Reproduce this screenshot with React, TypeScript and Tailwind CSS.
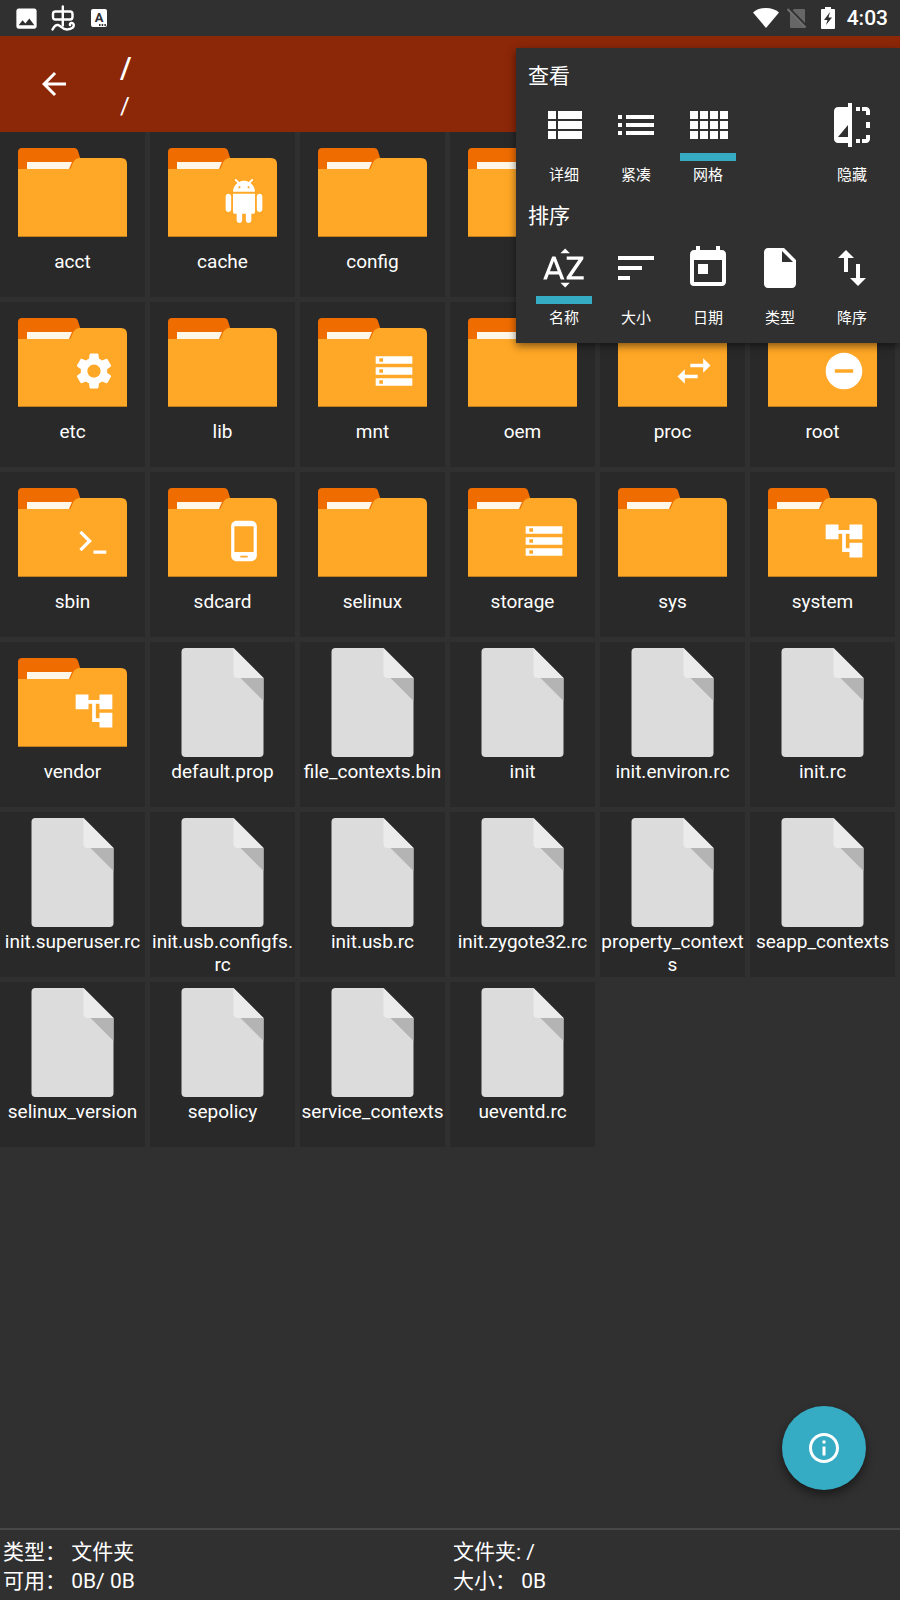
import React from 'react';
import {
  MdAccountTree,
  MdArrowBack,
  MdImage,
  MdInfoOutline,
  MdInsertDriveFile,
  MdList,
  MdPhoneAndroid,
  MdRemoveCircle,
  MdSettings,
  MdSort,
  MdSortByAlpha,
  MdStorage,
  MdSwapHoriz,
  MdSwapVert,
  MdToday,
} from 'react-icons/md';

type IconProps = { size?: number; x?: number; y?: number; className?: string };
type Icon = React.ComponentType<IconProps>;

const AndroidIcon = ({ size = 24, ...rest }: IconProps) => (
  <svg viewBox="0 0 24 24" width={size} height={size} fill="currentColor" {...rest}>
    <path d="M6 18c0 .55.45 1 1 1h1v3.5c0 .83.67 1.5 1.5 1.5s1.5-.67 1.5-1.5V19h2v3.5c0 .83.67 1.5 1.5 1.5s1.5-.67 1.5-1.5V19h1c.55 0 1-.45 1-1V8H6v10zM3.5 8C2.67 8 2 8.67 2 9.5v7c0 .83.67 1.5 1.5 1.5S5 17.33 5 16.5v-7C5 8.67 4.33 8 3.5 8zm17 0c-.83 0-1.5.67-1.5 1.5v7c0 .83.67 1.5 1.5 1.5s1.5-.67 1.5-1.5v-7c0-.83-.67-1.5-1.5-1.5zm-4.97-5.84l1.3-1.3c.2-.2.2-.51 0-.71-.2-.2-.51-.2-.71 0l-1.48 1.48C13.85 1.23 12.95 1 12 1c-.96 0-1.86.23-2.66.63L7.85.15c-.2-.2-.51-.2-.71 0-.2.2-.2.51 0 .71l1.31 1.31C6.97 3.26 6 5.01 6 7h12c0-1.99-.97-3.75-2.47-4.84zM10 5H9V4h1v1zm5 0h-1V4h1v1z" />
  </svg>
);

const PromptIcon = ({ size = 24, ...rest }: IconProps) => (
  <svg viewBox="0 0 24 24" width={size} height={size} fill="none" stroke="currentColor" strokeWidth="1.8" {...rest}>
    <path d="M4.6 7l5 5-5 5M11.7 18.100h7" />
  </svg>
);

const DetailsIcon = ({ size = 24, ...rest }: IconProps) => (
  <svg viewBox="0 0 24 24" width={size} height={size} fill="currentColor" {...rest}>
    <path d="M4 14h4v-4H4v4zm0 5h4v-4H4v4zM4 9h4V5H4v4zm5 5h12v-4H9v4zm0 5h12v-4H9v4zM9 5v4h12V5H9z" />
  </svg>
);

const GridIcon = ({ size = 24, ...rest }: IconProps) => (
  <svg viewBox="0 0 24 24" width={size} height={size} fill="currentColor" {...rest}>
    <path d="M3 9h4V5H3v4zm0 5h4v-4H3v4zm5 0h4v-4H8v4zm5 0h4v-4h-4v4zM8 9h4V5H8v4zm5-4v4h4V5h-4zm5 9h4v-4h-4v4zM3 19h4v-4H3v4zm5 0h4v-4H8v4zm5 0h4v-4h-4v4zm5 0h4v-4h-4v4zm0-14v4h4V5h-4z" />
  </svg>
);

const HideIcon = ({ size = 24, ...rest }: IconProps) => (
  <svg viewBox="0 0 24 24" width={size} height={size} fill="currentColor" {...rest}>
    <path d="M10 3H5c-1.1 0-2 .9-2 2v14c0 1.1.9 2 2 2h5v2h2V1h-2v2zm0 15H5l5-6v6z" />
    <path d="M14 3h2v2h-2zM17 3h2c1.1 0 2 .9 2 2v2h-2V5h-2zM19 10.5h2v3h-2zM14 19h2v2h-2zM19 17h2v2c0 1.1-.9 2-2 2h-2v-2h2z" />
  </svg>
);

type Entry = { name: string; folder?: boolean; badge?: Icon };

const entries: Entry[] = [
  { name: 'acct', folder: true },
  { name: 'cache', folder: true, badge: AndroidIcon },
  { name: 'config', folder: true },
  { name: 'd', folder: true },
  { name: 'data', folder: true },
  { name: 'dev', folder: true },
  { name: 'etc', folder: true, badge: MdSettings },
  { name: 'lib', folder: true },
  { name: 'mnt', folder: true, badge: MdStorage },
  { name: 'oem', folder: true },
  { name: 'proc', folder: true, badge: MdSwapHoriz },
  { name: 'root', folder: true, badge: MdRemoveCircle },
  { name: 'sbin', folder: true, badge: PromptIcon },
  { name: 'sdcard', folder: true, badge: MdPhoneAndroid },
  { name: 'selinux', folder: true },
  { name: 'storage', folder: true, badge: MdStorage },
  { name: 'sys', folder: true },
  { name: 'system', folder: true, badge: MdAccountTree },
  { name: 'vendor', folder: true, badge: MdAccountTree },
  { name: 'default.prop' },
  { name: 'file_contexts.bin' },
  { name: 'init' },
  { name: 'init.environ.rc' },
  { name: 'init.rc' },
  { name: 'init.superuser.rc' },
  { name: 'init.usb.configfs.rc' },
  { name: 'init.usb.rc' },
  { name: 'init.zygote32.rc' },
  { name: 'property_contexts' },
  { name: 'seapp_contexts' },
  { name: 'selinux_version' },
  { name: 'sepolicy' },
  { name: 'service_contexts' },
  { name: 'ueventd.rc' },
];

type Option = { label: string; icon: Icon; active?: boolean };

const viewOptions: (Option | null)[] = [
  { label: '详细', icon: DetailsIcon },
  { label: '紧凑', icon: MdList },
  { label: '网格', icon: GridIcon, active: true },
  null,
  { label: '隐藏', icon: HideIcon },
];

const sortOptions: (Option | null)[] = [
  { label: '名称', icon: MdSortByAlpha, active: true },
  { label: '大小', icon: MdSort },
  { label: '日期', icon: MdToday },
  { label: '类型', icon: MdInsertDriveFile },
  { label: '降序', icon: MdSwapVert },
];

const FolderIcon = ({ badge: Badge }: { badge?: Icon }) => (
  <svg viewBox="0 0 109 109" className="h-[109px] w-[109px] text-white">
    <path d="M0 36V14q0-4 4-4h52q3 0 4 3l4 13v10z" fill="#ef6c00" />
    <path d="M0 31h51c2 0 2-2 3-4 2-5 4-7 8-7h41q6 0 6 6v73H0z" fill="#ffa726" />
    <path d="M9 24h45l-3 7H9z" fill="#fff8e8" />
    <path d="M0 98h109v1H0z" fill="#c17f20" />
    {Badge && <Badge size={44} x={54} y={41} />}
  </svg>
);

const FileIcon = () => (
  <svg viewBox="0 0 109 109" className="h-[109px] w-[109px]">
    <path d="M17.500 0h48l30 30v75q0 4-4 4h-74q-4 0-4-4V4q0-4 4-4z" fill="#dcdcdc" />
    <path d="M65.500 0l30 30h-26q-4 0-4-4z" fill="#ebebeb" />
    <path d="M72.500 30h23v23z" fill="#b4b4b4" />
  </svg>
);

const StatusBar = () => (
  <div className="flex h-9 items-center justify-between pr-3 pl-[13px]">
    <div className="flex items-center">
      <MdImage size={27} />
      <svg viewBox="0 0 26 28" className="ml-[11px] h-7 w-[26px]" fill="none" stroke="currentColor" strokeWidth="2.4" strokeLinecap="round" strokeLinejoin="round">
        <path d="M4.500 15.500q-2.500 0-2.500-2.500V10q0-2.500 2.500-2.500h14.500q2.500 0 2.500 2.500v3q0 2.500-2.500 2.500zM11.800 2.500v19" />
        <path d="M1.500 25.500q2.500-5 5.500-4.500c3 .5 4 4.500 9 4.500 5.500 0 7.500-3 6.500-5.500-1-2-4-1-3.500 1" />
      </svg>
      <div className="relative ml-[14px] flex h-[18px] w-4 justify-center rounded-xs bg-white">
        <span className="text-[13px] leading-[17px] font-bold text-[#303030]">A</span>
        <svg viewBox="0 0 7 2" className="absolute right-px bottom-px h-[2px] w-[7px]" fill="#303030">
          <path d="M0 0h1.500v2H0zM2.700 0h1.500v2H2.700zM5.400 0h1.500v2H5.400z" />
        </svg>
      </div>
    </div>
    <div className="flex items-center">
      <svg viewBox="0 0 26 20" className="h-5 w-[26px]" fill="currentColor">
        <path d="M0 4.500Q5 0 13 0t13 4.500L13 20z" />
      </svg>
      <svg viewBox="0 0 20 21" className="ml-2 h-[21px] w-5">
        <path d="M7 1h10q1 0 1 1v17q0 1-1 1H4q-1 0-1-1V5z" fill="#666" />
        <path d="M2 0l18 18.500" stroke="#303030" strokeWidth="2" />
        <path d="M.5 1l18 18.500" stroke="#6e6e6e" strokeWidth="2" />
      </svg>
      <svg viewBox="0 0 14 22" className="ml-[14px] h-[22px] w-[14px]">
        <path d="M4 0h6v2h3q1 0 1 1v18q0 1-1 1H1q-1 0-1-1V3q0-1 1-1h3z" fill="currentColor" />
        <path d="M9 5l-6 8h3.500L5 18l6-7.500H7.500z" fill="#303030" />
      </svg>
      <time className="ml-3 text-[21px] leading-6 font-medium">4:03</time>
    </div>
  </div>
);

const OptionRow = ({ options }: { options: (Option | null)[] }) => (
  <div className="grid grid-cols-5">
    {options.map((option, i) =>
      option ? (
        <button key={option.label} type="button" aria-pressed={!!option.active} className="flex flex-col items-center">
          <option.icon size={48} />
          <span className={`mt-1 h-2 w-14 ${option.active ? 'bg-[#35acc4]' : ''}`} />
          <span className="mt-[3px] text-[15px] leading-[22px]">{option.label}</span>
        </button>
      ) : (
        <span key={i} />
      )
    )}
  </div>
);

const App = () => {
  return (
    <div className="relative flex min-h-screen flex-col bg-[#303030] font-['Roboto','Noto_Sans_CJK_SC',sans-serif] text-white">
      <StatusBar />

      <header className="flex h-24 items-center bg-[#8c2708] pl-9">
        <button type="button" aria-label="返回">
          <MdArrowBack size={36} />
        </button>
        <div className="ml-12 flex flex-col pt-1">
          <h1 className="text-[30px] leading-10 font-medium">/</h1>
          <p className="text-2xl leading-9">/</p>
        </div>
      </header>

      <main className="relative flex-1">
        <div className="grid grid-cols-6 gap-[5px] pr-[5px]">
          {entries.map(({ name, folder, badge }) => (
            <button key={name} type="button" className="flex h-[165px] min-w-0 flex-col items-center bg-[#292929] pt-1.5">
              {folder ? <FolderIcon badge={badge} /> : <FileIcon />}
              <span className="mt-[3px] w-full text-center text-[19px] leading-[23px] wrap-anywhere">{name}</span>
            </button>
          ))}
        </div>

        <button
          type="button"
          aria-label="信息"
          className="absolute right-[34px] bottom-[38px] flex h-21 w-21 items-center justify-center rounded-full bg-[#35acc4] shadow-[0_5px_10px_rgba(0,0,0,0.45)]"
        >
          <MdInfoOutline size={36} />
        </button>
      </main>

      <footer className="grid grid-cols-2 border-t-2 border-[#484848] pt-2 pb-1 text-[21px] leading-[29px]">
        <div className="pl-[3px]">
          <p>类型： 文件夹</p>
          <p>可用： 0B/ 0B</p>
        </div>
        <div className="pl-[3px]">
          <p>文件夹: /</p>
          <p>大小： 0B</p>
        </div>
      </footer>

      {/* View / sort popup */}
      <div className="absolute top-12 right-0 w-96 bg-[#303030] px-3 pt-[13px] pb-[14px] shadow-[0_3px_8px_rgba(0,0,0,0.5)]">
        <h2 className="mb-[9px] text-[21px] leading-[31px]">查看</h2>
        <OptionRow options={viewOptions} />
        <h2 className="mt-[15px] mb-3 text-[21px] leading-[31px]">排序</h2>
        <OptionRow options={sortOptions} />
      </div>
    </div>
  );
};

export default App;
